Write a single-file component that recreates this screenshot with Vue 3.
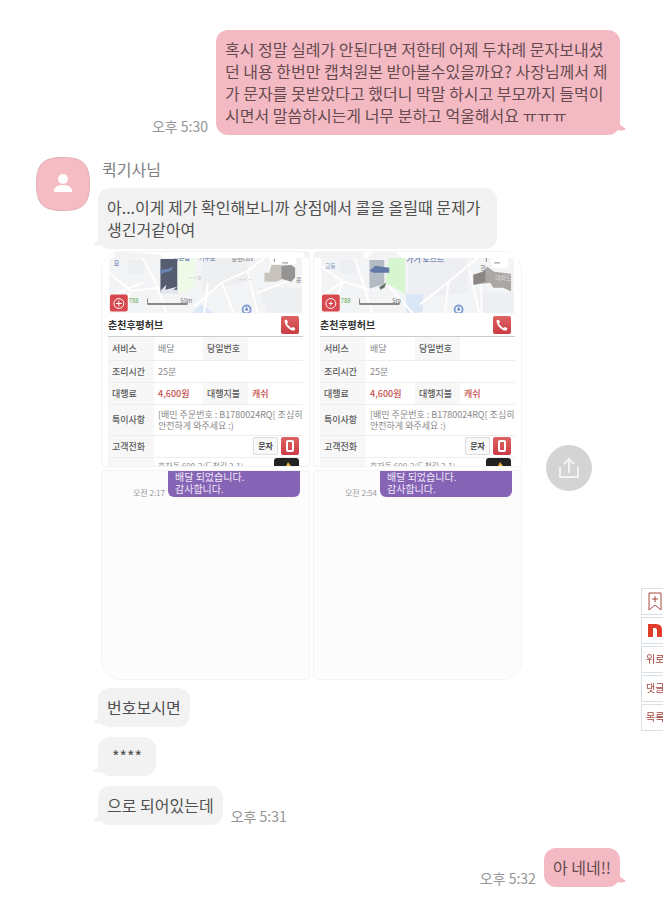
<script setup>
import {ref} from 'vue';

const photos = ref([
  { id: 1, time: '오전 2:17' },
  { id: 2, time: '오전 2:54' },
])

const replies = ref([
  { text: '번호보시면', time: '' },
  { text: '****', time: '' },
  { text: '으로 되어있는데', time: '오후 5:31' },
])

const links = ref(['위로', '댓글', '목록'])
</script>

<template>
    <main class="chat">
        <div class="row sent">
            <span class="time">오후 5:30</span>
            <p class="bubble">혹시 정말 실례가 안된다면 저한테 어제 두차례 문자보내셨던 내용 한번만 캡쳐원본 받아볼수있을까요? 사장님께서 제가 문자를 못받았다고 했더니 막말 하시고 부모까지 들먹이시면서 말씀하시는게 너무 분하고 억울해서요 ㅠㅠㅠ<svg class="tail" viewBox="0 0 8 12"><path d="M0 0 Q2 5 7 7 Q8 9 6 9 Q3 10 0 9Z"/></svg></p>
        </div>

        <section class="received">
            <svg class="avatar" viewBox="0 0 54 54">
                <path d="M27 .5C47 .5 53.500 7 53.500 27S47 53.500 27 53.500 .5 47 .5 27 7 .5 27 .5Z" fill="#f5bcc4" stroke="#dfb0b5"/>
                <circle cx="27" cy="22" r="5" fill="#fff"/>
                <path d="M18 35v-1c0-4 4-6 9-6s9 2 9 6v1z" fill="#fff"/>
            </svg>
            <div class="messages">
                <h2 class="name">퀵기사님</h2>
                <p class="bubble">아...이게 제가 확인해보니까 상점에서 콜을 올릴때 문제가 생긴거같아여<svg class="tail" viewBox="0 0 8 12"><path d="M8 0 Q6 5 1 7 Q0 9 2 9 Q5 10 8 9Z"/></svg></p>

                <div class="album">
                    <div class="photos">
                        <article v-for="photo in photos" :key="photo.id" class="photo order">
                            <svg v-if="photo.id === 1" class="map" viewBox="0 0 209 62">
                                <path d="M13 0h10l38 3-1 3H13zM203 0h6v6h-4z" fill="#f3f3f3"/>
                                <svg x="7" y="6" width="195" height="56" viewBox="0 0 195 56">
                                    <rect width="195" height="56" fill="#f3f4f6"/>
                                    <path d="M18 2h18v14H20zM92 0h48v24l-45 10zM150 30h45v26h-35z" fill="#eeeff1"/>
                                    <path d="M87 52l6-5 14 9H85z" fill="#dce7f7"/>
                                    <path d="M70 1h17v27l-10 7h-7z" fill="#effae9"/>
                                    <path d="M0 15l22 18 30-3M22 33L12 56M0 39l34-14M34 0l14 26 10 30M86 49l28-24 26-12 17-13M100 25l-4 31M114 25l12 31M140 13l10 43M150 35l45-17" fill="none" stroke="#fff" stroke-width="2"/>
                                    <path d="M52 1h17v34H52z" fill="#565d70"/>
                                    <path d="M52 12l8-1 5-2-2 4-11 3z" fill="#6b82b7"/>
                                    <path d="M52 33l6-6-1 5 12-3-4 3h5v4H52z" fill="#e2e5ea"/>
                                    <path d="M157 15h5l2-8h10v15l-6 2h-11z" fill="#c8c4bd"/>
                                    <path d="M174 8l10-1 4 3v10l-4 4-10-3z" fill="#969492"/>
                                    <path d="M162 0h27v6h-25z" fill="#fff"/>
                                    <path d="M175 5h6M167 1v3" stroke="#888"/>
                                    <text x="5" y="7" class="place">요</text>
                                    <text x="65" y="2" class="place">가온집</text>
                                    <text x="91" y="2" class="place">거두로</text>
                                    <text x="124" y="3" class="label">춘천CGV</text>
                                    <text x="80" y="22" class="faint">~ ~ o</text>
                                    <text x="131" y="24" class="faint">~ ~ ~</text>
                                    <text x="189" y="24" class="label">운</text>
                                    <text x="20" y="46" class="green">788</text>
                                    <path d="M39 41v6h40v-3M39 46h40" fill="none" stroke="#888"/>
                                    <text x="72" y="45" class="label">50m</text>
                                    <circle cx="139" cy="52" r="4" fill="#fff" stroke="#86a0d5" stroke-width="2"/>
                                    <path d="M137 53l2-4 2 4z" fill="#6787ca"/>
                                    <rect x="1" y="37" width="18" height="17" rx="2" fill="#d7494e"/>
                                    <circle cx="10" cy="46" r="5" fill="none" stroke="#fff"/>
                                    <path d="M10 43v6M7 46h6" stroke="#fff"/>
                                </svg>
                            </svg>
                            <svg v-else class="map" viewBox="0 0 209 62">
                                <path d="M0 0h50v6H0zM54 6q5-8 16-6h12l7 6z" fill="#f3f3f3"/>
                                <svg x="7" y="6" width="195" height="56" viewBox="0 0 195 56">
                                    <rect width="195" height="56" fill="#f3f4f6"/>
                                    <path d="M18 2h18v14H20zM88 0h60v35l-60 7zM160 35h35v21h-35z" fill="#edeff2"/>
                                    <path d="M86 36l17 1v17l-9 2h-8z" fill="#dae7f6"/>
                                    <path d="M68 0h17v36l-12-7-8-3z" fill="#d7f5cf"/>
                                    <path d="M0 8l22 16 27 8M0 39l22-15M22 24L10 56M34 0l8 24 10 32M68 28l25 28M100 47l29-23 29-24M129 24l-4 32M150 12l10 44M162 24v32" fill="none" stroke="#fff" stroke-width="2"/>
                                    <path d="M49 2h15v24l-15 5z" fill="#b3bcc5"/>
                                    <path d="M49 13l6-5 14 2v5H53z" fill="#6279a7"/>
                                    <path d="M59 29l7-4-2 5-4 2z" fill="#607265"/>
                                    <path d="M154 17l9-2 5-6 7 5 17 2v18l-8-4h-10l-3-5-17 2z" fill="#aaa7a4"/>
                                    <path d="M154 17l12-4v11l-12 3z" fill="#898683"/>
                                    <path d="M171 0h18v10h-16z" fill="#fff"/>
                                    <path d="M175 5h6M167 0v4" stroke="#888"/>
                                    <text x="4" y="10" class="place faded">교동</text>
                                    <text x="86" y="4" class="place large">가거 로스트</text>
                                    <text x="161" y="12" class="label">한</text>
                                    <text x="176" y="22" class="label light">대하드</text>
                                    <text x="20" y="46" class="green">788</text>
                                    <path d="M39 41v6h40v-3M39 46h40" fill="none" stroke="#888"/>
                                    <text x="72" y="45" class="label">5m</text>
                                    <circle cx="139" cy="52" r="4" fill="#fff" stroke="#86a0d5" stroke-width="2"/>
                                    <path d="M137 53l2-4 2 4z" fill="#6787ca"/>
                                    <rect x="1" y="37" width="18" height="17" rx="2" fill="#d7494e"/>
                                    <circle cx="10" cy="46" r="5" fill="none" stroke="#fff"/>
                                    <path d="M10 44v4M8 46h4" stroke="#fff"/>
                                </svg>
                            </svg>
                            <header class="shop">
                                <h3>춘천후평허브</h3>
                                <button class="red" aria-label="전화">
                                    <svg viewBox="0 0 18 18"><path d="M4 4q2-1 3 2l-1 2 4 4 2-1q3 1 2 3-2 1-4 0Q5 11 4 7 3 5 4 4z" fill="#fff"/></svg>
                                </button>
                            </header>
                            <table>
                                <colgroup><col class="c1"><col class="c2"><col class="c3"><col></colgroup>
                                <tbody>
                                    <tr class="first"><th>서비스</th><td>배달</td><th>당일번호</th><td></td></tr>
                                    <tr><th>조리시간</th><td colspan="3">25분</td></tr>
                                    <tr><th>대행료</th><td class="price">4,600원</td><th>대행지불</th><td class="price">캐쉬</td></tr>
                                    <tr class="note"><th>특이사항</th><td colspan="3">[배민 주문번호 : B1780024RQ[ 조심히<br>안전하게 와주세요 :)</td></tr>
                                    <tr>
                                        <th>고객전화</th>
                                        <td colspan="3">
                                            <div class="actions">
                                                <button class="sms">문자</button>
                                                <button class="red" aria-label="휴대폰">
                                                    <svg viewBox="0 0 18 18"><rect x="6" y="4" width="6" height="10" rx="1" fill="none" stroke="#fff" stroke-width="2"/></svg>
                                                </button>
                                            </div>
                                        </td>
                                    </tr>
                                    <tr class="cut"><th></th><td colspan="3"><div class="address"><span>효자동 600-2(도청길 2-1)</span><svg viewBox="0 0 25 10"><path d="M0 10V3q0-3 3-3h19q3 0 3 3v7z" fill="#222"/><path d="M14 4l3 4 2 2h-8z" fill="#e8b23b"/></svg></div></td></tr>
                                </tbody>
                            </table>
                        </article>
                        <article v-for="photo in photos" :key="'done' + photo.id" class="photo done">
                            <small>{{ photo.time }}</small>
                            <p>배달 되었습니다.<br>감사합니다.</p>
                        </article>
                    </div>
                    <button class="share" aria-label="공유">
                        <svg viewBox="0 0 46 46"><path d="M14 22v10h18V22M23 28V14M18 19l5-5 5 5" fill="none" stroke="#f2f2f2" stroke-width="2"/></svg>
                    </button>
                </div>

                <div v-for="reply in replies" :key="reply.text" class="row">
                    <p class="bubble">{{ reply.text }}<svg class="tail" viewBox="0 0 8 12"><path d="M8 0 Q6 5 1 7 Q0 9 2 9 Q5 10 8 9Z"/></svg></p>
                    <span v-if="reply.time" class="time">{{ reply.time }}</span>
                </div>
            </div>
        </section>

        <div class="row sent">
            <span class="time">오후 5:32</span>
            <p class="bubble">아 네네!!<svg class="tail" viewBox="0 0 8 12"><path d="M0 0 Q2 5 7 7 Q8 9 6 9 Q3 10 0 9Z"/></svg></p>
        </div>
    </main>

    <nav class="side">
        <a href="#" aria-label="스크랩">
            <svg viewBox="0 0 26 26"><path d="M7 4h12v17l-6-5-6 5z" fill="none" stroke="#a9483f"/><path d="M13 7v6M10 10h6" stroke="#a9483f"/></svg>
        </a>
        <a href="#" aria-label="홈">
            <svg viewBox="0 0 26 26"><path d="M6 19V6h8q6 0 6 6v7h-5v-7q0-2-2-2h-2v9z" fill="#e03c27"/></svg>
        </a>
        <a v-for="link in links" :key="link" href="#">{{ link }}</a>
    </nav>
</template>

<style>
body{
    margin: 0;
    background: #fff;
}
</style>

<style scoped>
.chat{
    padding: 30px 43px 10px 36px;
    font-family: "Noto Sans CJK KR", sans-serif;
    font-size: 16px;
    line-height: 22px;
    color: #505050;
}

p, h2, h3{
    margin: 0;
}

button{
    padding: 0;
    border: 0;
    font-family: inherit;
}

svg{
    display: block;
}

.row{
    display: flex;
    align-items: flex-end;
    gap: 8px;
}

.sent{
    justify-content: flex-end;
}

.bubble{
    position: relative;
    box-sizing: border-box;
    width: fit-content;
    min-width: 58px;
    max-width: 399px;
    padding: 8px 9px 9px;
    border-radius: 12px;
    background: #f2f2f2;
    text-align: left;
}

.sent .bubble{
    max-width: 404px;
    background: #f4bac3;
    color: #654a50;
}

.tail{
    position: absolute;
    left: -5px;
    bottom: 1px;
    width: 8px;
    height: 12px;
    fill: #f2f2f2;
}

.sent .tail{
    left: auto;
    right: -6px;
    bottom: 2px;
    fill: #f4bac3;
}

.time{
    flex: none;
    font-size: 14px;
    line-height: 18px;
    color: #949494;
}

.received{
    display: flex;
    gap: 8px;
    margin: 22px 0 23px;
}

.avatar{
    flex: none;
    width: 54px;
    height: 54px;
}

.messages{
    flex: 1;
    min-width: 0;
}

.name{
    padding: 0 4px;
    margin-bottom: 7px;
    font-size: 16px;
    font-weight: 400;
    line-height: 24px;
    color: #808080;
}

.messages .row{
    margin-top: 10px;
}

.messages .row:nth-child(5) .bubble{
    text-align: center;
}

.album{
    display: flex;
    align-items: center;
    gap: 24px;
    margin: 2px 0 -2px 3px;
}

.photos{
    display: grid;
    grid-template-columns: 1fr 1fr;
    gap: 3px;
    width: 421px;
    border-radius: 20px;
    overflow: hidden;
}

.photo{
    box-sizing: border-box;
    min-width: 0;
    overflow: hidden;
    border: 1px solid #f3f3f3;
    border-radius: 4px;
    background: #fcfcfc;
}

.photo:nth-child(1){
    border-top-left-radius: 20px;
}

.photo:nth-child(2){
    border-top-right-radius: 20px;
}

.photo:nth-child(3){
    border-bottom-left-radius: 20px;
}

.photo:nth-child(4){
    border-bottom-right-radius: 20px;
}

.order{
    height: 216px;
    background: #fff;
}

.done{
    display: flex;
    align-items: flex-start;
    justify-content: flex-end;
    gap: 3px;
    height: 210px;
    padding-right: 9px;
}

.done small{
    margin-top: 16px;
    font-size: 8px;
    line-height: 12px;
    color: #999;
}

.done p{
    box-sizing: border-box;
    width: 132px;
    padding: 0 7px 2px;
    border-radius: 0 0 6px 6px;
    background: #8563b5;
    color: #f1eaf8;
    font-size: 10px;
    line-height: 12px;
}

.map{
    width: 100%;
}

.map text{
    font-size: 6px;
}

.place{
    fill: #485d9e;
}

.faded{
    opacity: 0.6;
}

.map .large{
    font-size: 8px;
}

.label{
    fill: #777;
}

.light{
    fill: #ddd;
}

.faint{
    fill: #bbb;
}

.green{
    fill: #58a84e;
}

.shop{
    display: flex;
    align-items: center;
    justify-content: space-between;
    height: 23px;
    margin: 0 6px;
    padding-right: 4px;
    border-bottom: 1px solid #ccc;
}

.shop h3{
    font-size: 10px;
    line-height: 14px;
    color: #333;
}

.red{
    width: 18px;
    height: 18px;
    border-radius: 2px;
    background: linear-gradient(#df6464, #c93c43);
}

table{
    width: 195px;
    margin-left: 6px;
    table-layout: fixed;
    border-collapse: collapse;
    font-size: 9px;
    line-height: 11px;
}

.c1{
    width: 46px;
}

.c2{
    width: 49px;
}

.c3{
    width: 45px;
}

tr{
    height: 22px;
    border-bottom: 1px solid #eee;
}

.first{
    height: 23px;
}

th{
    padding: 0 4px;
    background: #f7f7f7;
    color: #5b5b5b;
    font-weight: 500;
    text-align: left;
    white-space: nowrap;
}

td{
    padding: 0 4px;
    color: #888;
    white-space: nowrap;
}

.price{
    color: #c6504d;
    font-weight: 500;
}

.note{
    height: 31px;
}

.note td{
    padding-right: 0;
}

.actions{
    display: flex;
    justify-content: flex-end;
    gap: 3px;
}

.sms{
    width: 25px;
    height: 18px;
    border: 1px solid #ddd;
    border-radius: 2px;
    background: #f8f8f8;
    color: #444;
    font-size: 8px;
    font-weight: 700;
    line-height: 12px;
}

.cut td{
    vertical-align: top;
}

.address{
    display: flex;
    justify-content: space-between;
    align-items: flex-start;
}

.address span{
    padding-top: 2px;
    font-size: 8px;
}

.address svg{
    width: 25px;
    height: 10px;
}

.share{
    flex: none;
    width: 46px;
    height: 46px;
    margin-top: 4px;
    border-radius: 50%;
    background: #d4d4d4;
}

/* quick menu hangs off the right edge */
.side{
    position: fixed;
    top: 588px;
    right: -6px;
    display: flex;
    flex-direction: column;
    gap: 2px;
}

.side a{
    box-sizing: border-box;
    width: 28px;
    height: 27px;
    border: 1px solid #d8e0e5;
    background: #fff;
    color: #9c3f35;
    font-family: "Noto Sans CJK KR", sans-serif;
    font-size: 10px;
    line-height: 24px;
    padding-left: 4px;
    white-space: nowrap;
    text-decoration: none;
}

.side svg{
    width: 26px;
    height: 26px;
    margin-left: -4px;
}
</style>
